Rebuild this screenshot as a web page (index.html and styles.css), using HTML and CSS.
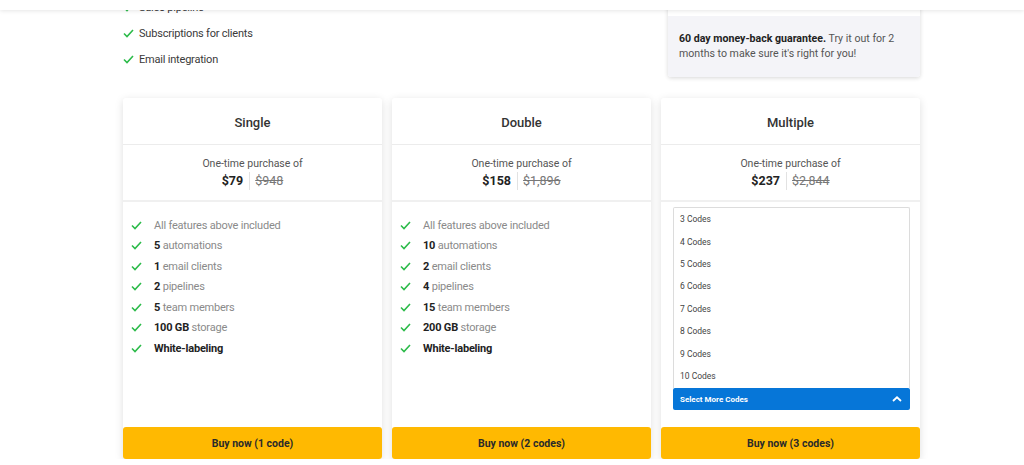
FILE: index.html
```html
<!DOCTYPE html>
<html>
<head>
<meta charset="utf-8">
<link rel="stylesheet" href="styles.css">
</head>
<body>
<div class="topbar"></div>
<div class="page">
  <div class="intro">
    <ul class="intro-list">
      <li><svg class="chk" viewBox="0 0 11 9"><polyline points="1,4.5 4,7.5 10,1"/></svg>Sales pipeline</li>
      <li><svg class="chk" viewBox="0 0 11 9"><polyline points="1,4.5 4,7.5 10,1"/></svg>Subscriptions for clients</li>
      <li><svg class="chk" viewBox="0 0 11 9"><polyline points="1,4.5 4,7.5 10,1"/></svg>Email integration</li>
    </ul>
    <div class="guarantee">
      <div class="guarantee-top"></div>
      <p class="guarantee-body"><b>60 day money-back guarantee.</b> Try it out for 2 months to make sure it's right for you!</p>
    </div>
  </div>

  <div class="plans">
    <div class="card">
      <div class="card-title">Single</div>
      <div class="card-price">
        <div class="otp">One-time purchase of</div>
        <div class="price"><span class="now">$79</span><span class="was">$948</span></div>
      </div>
      <ul class="features">
        <li><svg class="chk" viewBox="0 0 11 9"><polyline points="1,4.5 4,7.5 10,1"/></svg>All features above included</li>
        <li><svg class="chk" viewBox="0 0 11 9"><polyline points="1,4.5 4,7.5 10,1"/></svg><b>5</b>&nbsp;automations</li>
        <li><svg class="chk" viewBox="0 0 11 9"><polyline points="1,4.5 4,7.5 10,1"/></svg><b>1</b>&nbsp;email clients</li>
        <li><svg class="chk" viewBox="0 0 11 9"><polyline points="1,4.5 4,7.5 10,1"/></svg><b>2</b>&nbsp;pipelines</li>
        <li><svg class="chk" viewBox="0 0 11 9"><polyline points="1,4.5 4,7.5 10,1"/></svg><b>5</b>&nbsp;team members</li>
        <li><svg class="chk" viewBox="0 0 11 9"><polyline points="1,4.5 4,7.5 10,1"/></svg><b>100 GB</b>&nbsp;storage</li>
        <li><svg class="chk" viewBox="0 0 11 9"><polyline points="1,4.5 4,7.5 10,1"/></svg><b>White-labeling</b></li>
      </ul>
      <button class="buy">Buy now (1 code)</button>
    </div>

    <div class="card">
      <div class="card-title">Double</div>
      <div class="card-price">
        <div class="otp">One-time purchase of</div>
        <div class="price"><span class="now">$158</span><span class="was">$1,896</span></div>
      </div>
      <ul class="features">
        <li><svg class="chk" viewBox="0 0 11 9"><polyline points="1,4.5 4,7.5 10,1"/></svg>All features above included</li>
        <li><svg class="chk" viewBox="0 0 11 9"><polyline points="1,4.5 4,7.5 10,1"/></svg><b>10</b>&nbsp;automations</li>
        <li><svg class="chk" viewBox="0 0 11 9"><polyline points="1,4.5 4,7.5 10,1"/></svg><b>2</b>&nbsp;email clients</li>
        <li><svg class="chk" viewBox="0 0 11 9"><polyline points="1,4.5 4,7.5 10,1"/></svg><b>4</b>&nbsp;pipelines</li>
        <li><svg class="chk" viewBox="0 0 11 9"><polyline points="1,4.5 4,7.5 10,1"/></svg><b>15</b>&nbsp;team members</li>
        <li><svg class="chk" viewBox="0 0 11 9"><polyline points="1,4.5 4,7.5 10,1"/></svg><b>200 GB</b>&nbsp;storage</li>
        <li><svg class="chk" viewBox="0 0 11 9"><polyline points="1,4.5 4,7.5 10,1"/></svg><b>White-labeling</b></li>
      </ul>
      <button class="buy">Buy now (2 codes)</button>
    </div>

    <div class="card">
      <div class="card-title">Multiple</div>
      <div class="card-price">
        <div class="otp">One-time purchase of</div>
        <div class="price"><span class="now">$237</span><span class="was">$2,844</span></div>
      </div>
      <div class="codes">
        <ul class="code-list">
          <li>3 Codes</li>
          <li>4 Codes</li>
          <li>5 Codes</li>
          <li>6 Codes</li>
          <li>7 Codes</li>
          <li>8 Codes</li>
          <li>9 Codes</li>
          <li>10 Codes</li>
        </ul>
        <div class="code-select">Select More Codes
          <svg class="chev" viewBox="0 0 10 6"><polyline points="1,5 5,1.3 9,5"/></svg>
        </div>
      </div>
      <button class="buy">Buy now (3 codes)</button>
    </div>
  </div>
</div>
</body>
</html>
```

FILE: styles.css
```css
* { box-sizing: border-box; }
html, body { margin: 0; padding: 0; background: #fff; }
body { font-family: Roboto, "Liberation Sans", Arial, sans-serif; color: #333; overflow: hidden; }

.topbar {
  position: fixed; top: 0; left: 0; right: 0; height: 10px;
  background: #fff; box-shadow: 0 1px 4px rgba(0,0,0,0.10); z-index: 5;
}

.page { width: 797px; margin: 0 0 0 123px; }

.intro { display: flex; justify-content: space-between; align-items: flex-start; margin-top: -6px; }
.intro-list { list-style: none; margin: 0; padding: 0; }
.intro-list li { display: flex; align-items: center; height: 26px; font-size: 11px; letter-spacing: -0.2px; color: #3a3a3a; }
.intro-list .chk { margin-right: 5px; }

.chk { width: 11px; height: 9px; flex: none; fill: none; stroke: #2cbb4a; stroke-width: 1.6; }

.guarantee {
  width: 252px; margin-top: -23px;
  background: #fff; box-shadow: 0 1px 4px rgba(0,0,0,0.16); border-radius: 0 0 3px 3px;
}
.guarantee-top { height: 45px; background: #fff; }
.guarantee-body {
  margin: 0;
  background: #f4f4f8; padding: 15px 16px 16px 11px;
  font-size: 10.6px; line-height: 15px; color: #555;
  border-radius: 0 0 3px 3px;
}
.guarantee-body b { color: #222; font-weight: 700; }

.plans { display: flex; gap: 10px; margin-top: 21px; }
.card {
  width: 259px; height: 361px; display: flex; flex-direction: column;
  background: #fff; box-shadow: 0 2px 8px rgba(0,0,0,0.13); border-radius: 3px;
}
.card-title {
  height: 47px; display: flex; align-items: center; justify-content: center; padding-top: 2px;
  font-size: 13px; font-weight: 500; color: #333; border-bottom: 1px solid #ececec;
}
.card-price {
  height: 57px; border-bottom: 2px solid #f0f0f0; text-align: center; padding-top: 12px;
}
.otp { font-size: 10.5px; color: #555; line-height: 13px; }
.price { display: flex; justify-content: center; align-items: center; margin-top: 2px; height: 18px; }
.now { font-size: 12.5px; font-weight: 700; color: #222; padding-right: 6px; border-right: 1px solid #e2e2e2; line-height: 18px; }
.was { font-size: 12.5px; color: #777; text-decoration: line-through; padding-left: 5px; line-height: 18px; }

.features { list-style: none; margin: 0; padding: 13px 0 0 8px; flex: 1; }
.features li {
  display: flex; align-items: center; height: 20.5px;
  font-size: 11px; letter-spacing: -0.2px; color: #8a8a8a;
}
.features .chk { margin-right: 12px; }
.features b { color: #222; font-weight: 700; }

.codes { flex: 1; padding: 5px 10px 0 12px; }
.code-list {
  list-style: none; margin: 0; padding: 0; height: 181px;
  border: 1px solid #dcdcdc; border-bottom: none; border-radius: 2px 2px 0 0;
}
.code-list li { height: 22.4px; display: flex; align-items: center; padding-left: 6px; font-size: 8.5px; color: #444; }
.code-select {
  height: 22px; background: #0676d8; color: #fff; font-size: 8px; font-weight: 700;
  display: flex; align-items: center; justify-content: space-between; padding: 0 8px 0 7px; border-radius: 2px;
}
.chev { width: 10px; height: 6px; fill: none; stroke: #fff; stroke-width: 1.8; }

.buy {
  height: 32px; border: none; border-radius: 3px; background: #ffb901; width: 100%;
  font-family: Roboto, "Liberation Sans", sans-serif; font-size: 10.5px; font-weight: 700; color: #2a2a2a;
  cursor: pointer; padding: 0;
}
```
